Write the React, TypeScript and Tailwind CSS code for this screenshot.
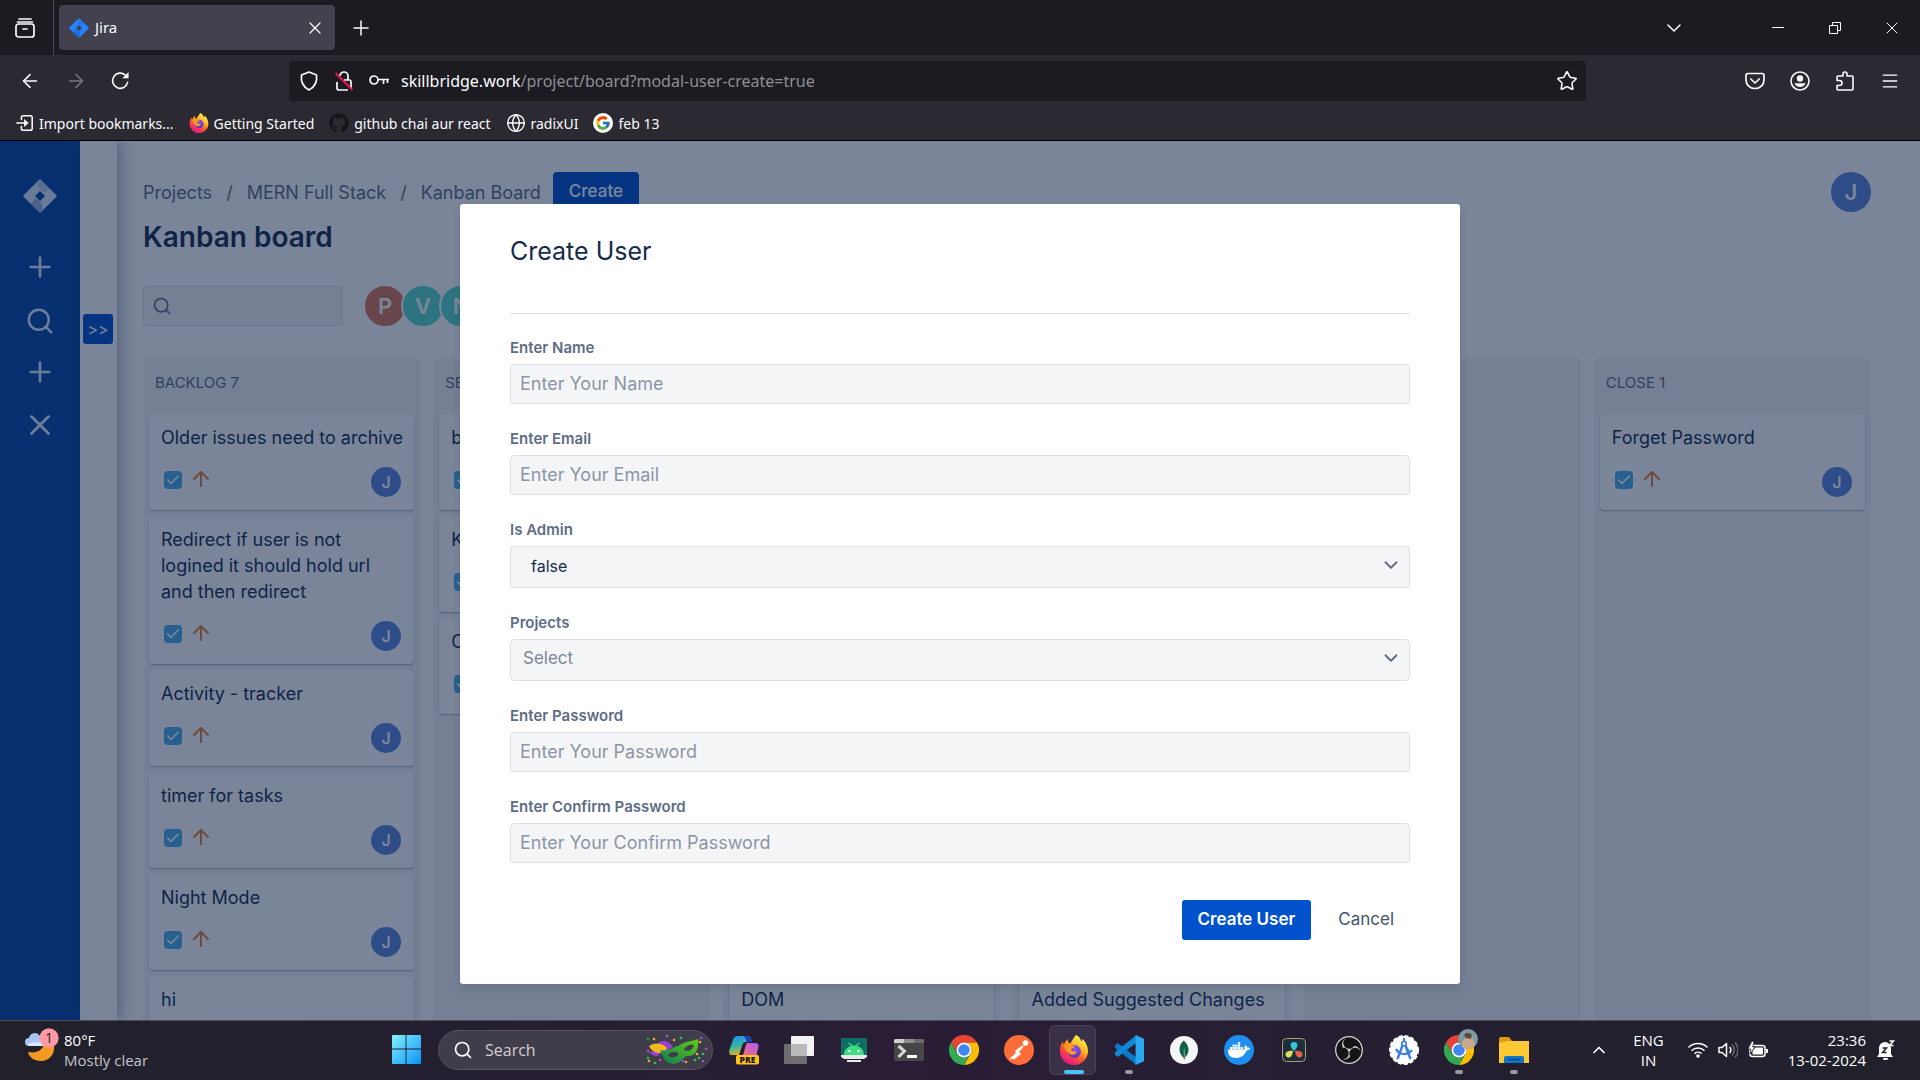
import React from 'react';
import {
  ArrowLeft,
  ArrowRight,
  ArrowUp,
  Check,
  ChevronDown,
  ChevronUp,
  Globe,
  Menu,
  Plus,
  Search,
  Star,
  X,
} from 'lucide-react';
import { FaGithub } from 'react-icons/fa';
import { FcGoogle } from 'react-icons/fc';
import { SiDocker, SiMongodb, SiObsstudio } from 'react-icons/si';

/* ---------- Icons ---------- */

interface IconProps {
  className?: string;
}

const JiraIcon: React.FC<IconProps> = ({ className }) => (
  <svg viewBox="0 0 34 34" className={className}>
    <path fillRule="evenodd" fill="currentColor" d="M17 0l16.400 16.200a1.100 1.100 0 010 1.600L17 34 .6 17.800a1.100 1.100 0 010-1.600zM17 12l-5 5 5 5 5-5z" />
    <path d="M17 0c-3 3-3 7 0 10l5 4 4-5z" fill="#0747a6" opacity="0.18" />
    <path d="M17 34c3-3 3-8 0-11l-5-4-4 6z" fill="#0747a6" opacity="0.35" />
  </svg>
);

const FirefoxIcon: React.FC<IconProps> = ({ className }) => (
  <svg viewBox="0 0 32 32" className={className}>
    <defs>
      <linearGradient id="ff-body" x1="0.8" y1="0.1" x2="0.25" y2="0.95">
        <stop offset="0" stopColor="#fff44f" />
        <stop offset="0.35" stopColor="#ffb01f" />
        <stop offset="0.6" stopColor="#ff5a2c" />
        <stop offset="1" stopColor="#e3128f" />
      </linearGradient>
      <radialGradient id="ff-core" cx="0.5" cy="0.3" r="0.7">
        <stop offset="0" stopColor="#8b55ee" />
        <stop offset="1" stopColor="#5a32c8" />
      </radialGradient>
    </defs>
    <path
      fill="url(#ff-body)"
      d="M18 0c3 1 5 4 6 7 1-1 1-2 1-3 3 3 6 8 6 13 0 8-6.500 15-15 15S1 25.500 1 17c0-4 1-7 3-10 0 2 1 3 1 3 1-2 3-4 4-6 0 3 1 4 3 5 2-3 3-5 6-9z"
    />
    <circle cx="16.500" cy="17.500" r="6.800" fill="url(#ff-core)" />
    <path fill="#ff9a20" d="M5 11c3-2 6-1 8 0l4 1c-1 2-4 2-4 4 1 2 4 1 6 2-2 4-7 4-9 1-2-1-4-4-5-8z" />
  </svg>
);

const ChromeIcon: React.FC<IconProps> = ({ className }) => (
  <svg viewBox="0 0 32 32" className={className}>
    <path fill="#ea4335" d="M2.100 8A16 16 0 0129.900 8H16a8 8 0 00-6.900 12z" />
    <path fill="#fbbc04" d="M29.900 8A16 16 0 0116 32l6.900-12A8 8 0 0016 8z" />
    <path fill="#34a853" d="M16 32A16 16 0 012.100 8l7 12a8 8 0 0013.800 0z" />
    <circle cx="16" cy="16" r="8" fill="#fff" />
    <circle cx="16" cy="16" r="6.200" fill="#4285f4" />
  </svg>
);

const LibraryIcon: React.FC<IconProps> = ({ className }) => (
  <svg viewBox="0 0 20 20" className={className} fill="none" stroke="currentColor" strokeWidth="1.700" strokeLinecap="round">
    <path d="M4 1h12M2.500 4h15" />
    <rect x="1" y="6" width="18" height="13" rx="2.500" />
    <path d="M8 11h4" />
  </svg>
);

const ReloadIcon: React.FC<IconProps> = ({ className }) => (
  <svg viewBox="0 0 20 20" className={className} fill="none" stroke="currentColor" strokeWidth="1.700" strokeLinecap="round">
    <path d="M17.500 12A8 8 0 1115 4.200l2 2" />
    <path d="M18.500 1v6.500H12z" fill="currentColor" stroke="none" />
  </svg>
);

const ShieldIcon: React.FC<IconProps> = ({ className }) => (
  <svg viewBox="0 0 20 20" className={className} fill="none" stroke="currentColor" strokeWidth="1.700" strokeLinejoin="round">
    <path d="M10 1l7.500 3c.8 6-.8 11.500-7.500 15C3.300 15.500 1.700 10 2.500 4z" />
  </svg>
);

const BrokenLockIcon: React.FC<IconProps> = ({ className }) => (
  <svg viewBox="0 0 20 20" className={className} fill="none" stroke="currentColor" strokeWidth="1.700">
    <path d="M6 5a4 4 0 018 0v4" />
    <path d="M10 9h5a2 2 0 012 2v6M14 19H5a2 2 0 01-2-2v-6" />
    <path d="M1.500 2l17 17" stroke="#f0174f" strokeWidth="2" />
  </svg>
);

const KeyIcon: React.FC<IconProps> = ({ className }) => (
  <svg viewBox="0 0 20 20" className={className} fill="none" stroke="currentColor" strokeWidth="1.700">
    <circle cx="5" cy="9" r="4" />
    <path d="M9 8.500h11M14.500 9v4M18.500 9v3" />
  </svg>
);

const ImportIcon: React.FC<IconProps> = ({ className }) => (
  <svg viewBox="0 0 20 20" className={className} fill="none" stroke="currentColor" strokeWidth="1.700" strokeLinecap="round">
    <path d="M6 6V4a2 2 0 012-2h8a2 2 0 012 2v12a2 2 0 01-2 2H8a2 2 0 01-2-2v-2M1 10h10" />
    <path d="M9 5.500l5 4.500-5 4.500z" fill="currentColor" stroke="none" />
  </svg>
);

const PocketIcon: React.FC<IconProps> = ({ className }) => (
  <svg viewBox="0 0 20 20" className={className} fill="none" stroke="currentColor" strokeWidth="1.700" strokeLinecap="round" strokeLinejoin="round">
    <path d="M3 2.500h14a2 2 0 012 2V9a9 8.500 0 01-18 0V4.500a2 2 0 012-2z" />
    <path d="M5.800 8l4.200 4 4.200-4" />
  </svg>
);

const AccountIcon: React.FC<IconProps> = ({ className }) => (
  <svg viewBox="0 0 20 20" className={className} fill="none">
    <circle cx="10" cy="10" r="9" stroke="currentColor" strokeWidth="1.600" />
    <circle cx="10" cy="7.500" r="3.200" fill="currentColor" />
    <path d="M4.500 12.300h11c-.8 2.500-3 3.700-5.500 3.700s-4.700-1.200-5.500-3.700z" fill="currentColor" />
  </svg>
);

const PuzzleIcon: React.FC<IconProps> = ({ className }) => (
  <svg viewBox="0 0 20 20" className={className} fill="none" stroke="currentColor" strokeWidth="1.600" strokeLinejoin="round">
    <path d="M2 7.500V6a1 1 0 011-1h5V3a2 2 0 014 0v2h5a1 1 0 011 1v12a1 1 0 01-1 1H3a1 1 0 01-1-1v-3.500h2.500a2.500 2.500 0 000-5H2z" />
  </svg>
);

const VsCodeIcon: React.FC<IconProps> = ({ className }) => (
  <svg viewBox="0 0 32 32" className={className}>
    <path fill="#0a7ac8" d="M1 11l3-2.500L24 24v8L1 13.500z" />
    <path fill="#1088d8" d="M1 21l3 2.500L24 8V0L1 18.500z" />
    <path fill="#2aa9f2" d="M23 0l9 4v24l-9 4z" />
  </svg>
);

const WindowsIcon: React.FC<IconProps> = ({ className }) => (
  <svg viewBox="0 0 30 30" className={className}>
    <defs>
      <linearGradient id="win" x1="0" y1="0" x2="1" y2="1">
        <stop offset="0" stopColor="#83f2ff" />
        <stop offset="1" stopColor="#0a93f5" />
      </linearGradient>
    </defs>
    <path fill="url(#win)" d="M0 1a1 1 0 011-1h13v14H0zM15 0h14a1 1 0 011 1v13H15zM0 15h14v15H1a1 1 0 01-1-1zM15 15h15v14a1 1 0 01-1 1H15z" />
  </svg>
);

const WeatherIcon: React.FC<IconProps> = ({ className }) => (
  <svg viewBox="0 0 34 34" className={className}>
    <path fill="#f59a23" d="M28 13c4 10-2 20-12 20C9 33 4 29 3 24c10 2 17-3 16-12z" />
    <path fill="#a9c4f5" d="M4 18a4 4 0 010-8 6 6 0 0111-2 5 5 0 015 10z" />
    <path fill="#dde9fd" d="M3 16c4-2 12-2 17-1v3H4z" />
    <circle cx="24" cy="10" r="9.700" fill="#ff99a4" />
    <text x="24" y="15" textAnchor="middle" fontSize="14" fontFamily="Open Sans, sans-serif" fill="#2b2030">
      1
    </text>
  </svg>
);

const confetti = [
  [2, 5, '#1f9e45'], [8, 5, '#e0b030'], [21, 2, '#a34fd8'], [28, 6, '#e0b030'], [35, 4, '#2fc44c'],
  [55, 4, '#a34fd8'], [54, 8, '#e0b030'], [60, 15, '#a34fd8'], [51, 20, '#e0b030'], [57, 20, '#2fc44c'],
  [53, 24, '#2fc44c'], [57, 27, '#a34fd8'], [2, 17, '#a34fd8'], [2, 24, '#2fc44c'], [3, 27, '#e0b030'],
  [9, 29, '#2fc44c'], [14, 26, '#a34fd8'], [37, 27, '#a34fd8'], [40, 28, '#e0b030'], [49, 26, '#2fc44c'],
] as const;

const MaskIcon: React.FC<IconProps> = ({ className }) => (
  <svg viewBox="0 0 62 32" className={className}>
    <defs>
      <linearGradient id="mask" x1="0" y1="1" x2="1" y2="0">
        <stop offset="0" stopColor="#0c7a54" />
        <stop offset="1" stopColor="#62cf15" />
      </linearGradient>
    </defs>
    {confetti.map(([x, y, fill]) => (
      <circle key={`${x}-${y}`} cx={x} cy={y} r="1.300" fill={fill} />
    ))}
    <path fill="#9a3fd4" d="M12 9c5-4 12-2 15 4l-7 4zM3 18c4 0 8-2 13-1l-4 5c-3 0-7-1-9-4z" />
    <path fill="#f5b71f" d="M3 12c6-4 14-3 18 2l-3 5C12 19 6 19 3 12z" />
    <path
      fill="url(#mask)"
      fillRule="evenodd"
      d="M14 16c6 2 11-2 18-4 6-5 12-4 20-7 1 10-2 17-10 17-5 0-6 7-14 8-7 0-11-5-14-14zm8 5c3 4 8 3 11-1-3-3-8-3-11 1zm16-5c4 2 9 0 10-5-4-1-9 1-10 5z"
    />
  </svg>
);

const CopilotIcon: React.FC<IconProps> = ({ className }) => (
  <svg viewBox="0 0 30 30" className={className}>
    <defs>
      <linearGradient id="cp-a" x1="0" y1="0" x2="0.3" y2="1">
        <stop offset="0" stopColor="#1f8ff5" />
        <stop offset="0.6" stopColor="#38b6a0" />
        <stop offset="1" stopColor="#e6b020" />
      </linearGradient>
      <linearGradient id="cp-b" x1="1" y1="0" x2="0" y2="1">
        <stop offset="0" stopColor="#b05cf5" />
        <stop offset="1" stopColor="#fb6a70" />
      </linearGradient>
    </defs>
    <path fill="url(#cp-a)" d="M9 1h9c3 0 4 2 5 6h-6c-2 0-3 1-4 4l-3 9H3c-4 0-3-4-2-7l3-8c1-3 2-4 5-4z" />
    <path fill="#1840c0" d="M15 1h3c3 0 4 2 5 6h-5z" />
    <path fill="url(#cp-b)" d="M18 8h8c4 0 4 3 3 6l-2 8H12c3-2 3-6 4-9s1-4 2-5z" />
    <rect x="7" y="20" width="23" height="9.500" rx="2" fill="#ffc31f" />
    <text x="18.500" y="28" textAnchor="middle" fontSize="8.500" fontWeight="800" fontFamily="Open Sans, sans-serif" fill="#201a10">
      PRE
    </text>
  </svg>
);

const TaskViewIcon: React.FC<IconProps> = ({ className }) => (
  <svg viewBox="0 0 30 30" className={className}>
    <rect x="0" y="9" width="23" height="20" rx="1" fill="#6e6e70" />
    <rect x="7" y="1" width="23" height="20" rx="1" fill="#f2f2f3" />
    <path d="M7 9h16v12H7z" fill="#b9b9bb" />
  </svg>
);

const AndroidIcon: React.FC<IconProps> = ({ className }) => (
  <svg viewBox="0 0 30 30" className={className}>
    <rect x="2" y="3" width="26" height="18" rx="1" fill="#0d6e63" />
    <path fill="#3ddc84" d="M5 20c0-5 3-8 7-9l-3-3 1-.6 3.500 3h3l3.500-3 1 .6-3 3c4 1 7 4 7 9z" />
    <circle cx="10.500" cy="16" r="1.200" fill="#fff" />
    <circle cx="19.500" cy="16" r="1.200" fill="#fff" />
    <path fill="#e8eaea" d="M2 20h26v2l-3 2H5l-3-2zM8 25h14v2H8z" />
  </svg>
);

const TerminalIcon: React.FC<IconProps> = ({ className }) => (
  <svg viewBox="0 0 30 30" className={className}>
    <rect x="0" y="4" width="30" height="22" rx="1.500" fill="#464646" />
    <path d="M0 5.500A1.500 1.500 0 011.500 4H10v4H0z" fill="#d0d0d0" />
    <path d="M10 4h10v4H10z" fill="#8e8e8e" />
    <path d="M20 4h8.500A1.500 1.500 0 0130 5.500V8H20z" fill="#6a6a6a" />
    <path d="M4.500 11l6 5-6 6" fill="none" stroke="#d6d6d6" strokeWidth="3" />
    <path d="M13 20h10v3H13z" fill="#fff" />
  </svg>
);

const PostmanIcon: React.FC<IconProps> = ({ className }) => (
  <svg viewBox="0 0 30 30" className={className}>
    <circle cx="15" cy="15" r="15" fill="#ff6c37" />
    <circle cx="21.500" cy="8" r="2.800" fill="#fff" />
    <path d="M19 11l-5 6 2 2-7 5 4-7-1-1z" fill="#ffd9cb" stroke="#fff" strokeWidth="1.600" />
    <path d="M6 24l6-5" stroke="#fff" strokeWidth="1.500" />
  </svg>
);

const DavinciIcon: React.FC<IconProps> = ({ className }) => (
  <svg viewBox="0 0 30 30" className={className}>
    <rect x="3.500" y="3.500" width="23" height="23" rx="4" fill="#1c2f3c" stroke="#b09a6a" />
    <path d="M15 16c-5-5-4-9 0-9s5 4 0 9z" fill="#35c5dd" />
    <path d="M14 16c-1 7-5 8-7 5s2-6 7-5z" fill="#dfe058" />
    <path d="M16 16c1 7 5 8 7 5s-2-6-7-5z" fill="#ef5b4c" />
  </svg>
);

const AndroidStudioIcon: React.FC<IconProps> = ({ className }) => (
  <svg viewBox="0 0 30 30" className={className}>
    <circle cx="15" cy="15" r="14" fill="#fff" stroke="#fff" strokeWidth="2" strokeDasharray="4 2" />
    <path d="M16 12a6 6 0 015 8l-3-1z" fill="#35b566" />
    <path d="M14 9L8.500 24M16 9l5.500 15" stroke="#3c7de8" strokeWidth="2.400" fill="none" />
    <path d="M7 14c3 6 12 7 16 1" stroke="#3c7de8" strokeWidth="2.200" fill="none" />
    <path d="M15 3v3" stroke="#3c7de8" strokeWidth="2" />
    <circle cx="15" cy="8.500" r="2.300" fill="#fff" stroke="#3c7de8" strokeWidth="1.600" />
  </svg>
);

const ExplorerIcon: React.FC<IconProps> = ({ className }) => (
  <svg viewBox="0 0 30 30" className={className}>
    <path d="M0 4a2 2 0 012-2h8l3 4h-1v6H0z" fill="#e09c10" />
    <path d="M0 8l9-2h21v22H0z" fill="#fdc935" />
    <path d="M5 28v-5a2 2 0 012-2h16a2 2 0 012 2v5z" fill="#1074c9" />
    <path d="M9 24.500h12" stroke="#07498c" strokeWidth="1.500" />
  </svg>
);

const WifiIcon: React.FC<IconProps> = ({ className }) => (
  <svg viewBox="0 0 20 16" className={className} fill="none" stroke="currentColor" strokeWidth="1.500">
    <path d="M.5 5.500a13.500 13.500 0 0119 0M3.500 8.700a9.200 9.200 0 0113 0M6.500 11.600a5 5 0 017 0" />
    <circle cx="10" cy="14" r="1.800" fill="currentColor" stroke="none" />
  </svg>
);

const VolumeIcon: React.FC<IconProps> = ({ className }) => (
  <svg viewBox="0 0 20 18" className={className} fill="none" stroke="currentColor" strokeWidth="1.500" strokeLinejoin="round">
    <path d="M1 6.500h3l4.500-4v13L4 11.500H1z" />
    <path d="M11.500 6a4 4 0 010 6" />
    <path d="M14 3.500a8 8 0 010 11M17 1.500c4 4 4 11 0 15" stroke="#66666f" />
  </svg>
);

const BatteryIcon: React.FC<IconProps> = ({ className }) => (
  <svg viewBox="0 0 20 18" className={className}>
    <rect x="2" y="4.500" width="15" height="11" rx="2.500" fill="none" stroke="currentColor" strokeWidth="1.500" />
    <path d="M4.500 13.500V10l3-3.500h7.500v7zM18 8h2v4h-2z" fill="currentColor" />
    <path d="M4 0L0 8h3l-1 5 5-7H4.500L6 1z" fill="currentColor" stroke="#22222c" strokeWidth="0.700" />
  </svg>
);

const BellIcon: React.FC<IconProps> = ({ className }) => (
  <svg viewBox="0 0 18 20" className={className}>
    <path d="M2 14V8a6 6 0 0112 0v6l2 3H0zM6 18h5a2.500 2.500 0 01-5 0z" fill="currentColor" />
    <path d="M5.500 8h4l-4 4.500h4" fill="none" stroke="#22222c" strokeWidth="1.500" />
    <path d="M12.500 1h4l-4 4.500h4" fill="none" stroke="currentColor" strokeWidth="1.500" />
  </svg>
);

/* ---------- Browser chrome ---------- */

const TabBar: React.FC = () => (
  <div className="flex h-[55px] shrink-0 items-center bg-[#1c1b22] text-[#fbfbfe]">
    <button aria-label="View" className="ml-[15px] mr-[18px] h-5 w-5">
      <LibraryIcon className="h-5 w-5" />
    </button>
    <div className="mr-[5px] h-full w-px bg-[#4a4954]" />
    <div className="flex h-[45px] w-[276px] items-center rounded bg-[#42414d] pl-2.5 pr-2.5 shadow">
      <JiraIcon className="h-5 w-5 text-[#2684ff]" />
      <span className="ml-[6px] flex-1 text-[15px]">Jira</span>
      <button aria-label="Close tab">
        <X className="h-5 w-5" strokeWidth={1.5} />
      </button>
    </div>
    <button aria-label="New tab" className="ml-[14px]">
      <Plus className="h-6 w-6" strokeWidth={1.5} />
    </button>
    <div className="ml-auto flex items-center">
      <button aria-label="List all tabs" className="mr-[63px]">
        <ChevronDown className="h-6 w-6" strokeWidth={1.5} />
      </button>
      <button aria-label="Minimise" className="flex w-[57px] justify-center">
        <span className="h-px w-3 bg-white" />
      </button>
      <button aria-label="Restore" className="flex w-[57px] justify-center">
        <svg viewBox="0 0 12 12" className="h-3 w-3" fill="none" stroke="currentColor">
          <path d="M.5 3.500h8v8h-8zM3.500 3V.5h8v8H9" />
        </svg>
      </button>
      <button aria-label="Close" className="flex w-[57px] justify-center">
        <X className="h-5 w-5" strokeWidth={1.2} />
      </button>
    </div>
  </div>
);

const NavBar: React.FC = () => (
  <div className="flex h-[51px] shrink-0 items-center bg-[#2b2a33] text-[#fbfbfe]">
    <div className="flex items-center gap-6 pl-[19px]">
      <button aria-label="Back">
        <ArrowLeft className="h-[22px] w-[22px]" strokeWidth={1.7} />
      </button>
      <button aria-label="Forward" className="text-[#77767f]">
        <ArrowRight className="h-[22px] w-[22px]" strokeWidth={1.7} />
      </button>
      <button aria-label="Reload">
        <ReloadIcon className="h-[19px] w-[19px]" />
      </button>
    </div>
    <div className="mx-[159px] flex h-10 min-w-0 flex-1 items-center rounded bg-[#1c1b22]">
      <ShieldIcon className="ml-2.5 h-5 w-5" />
      <BrokenLockIcon className="ml-[15px] h-5 w-5" />
      <KeyIcon className="ml-[15px] h-5 w-5" />
      <div className="ml-3 flex-1 truncate text-base text-[#8f8f96]">
        <span className="text-[#fbfbfe]">skillbridge.work</span>/project/board?modal-user-create=true
      </div>
      <button aria-label="Bookmark this page" className="mr-2">
        <Star className="h-[22px] w-[22px]" strokeWidth={1.7} />
      </button>
    </div>
    <div className="flex items-center gap-[25px] pr-5">
      <button aria-label="Save to Pocket">
        <PocketIcon className="h-5 w-5" />
      </button>
      <button aria-label="Account">
        <AccountIcon className="h-5 w-5" />
      </button>
      <button aria-label="Extensions">
        <PuzzleIcon className="h-5 w-5" />
      </button>
      <button aria-label="Menu">
        <Menu className="h-5 w-5" strokeWidth={1.6} />
      </button>
    </div>
  </div>
);

const bookmarks = [
  { label: 'Import bookmarks...', icon: <ImportIcon className="h-[18px] w-[18px]" /> },
  { label: 'Getting Started', icon: <FirefoxIcon className="h-5 w-5" /> },
  { label: 'github chai aur react', icon: <FaGithub className="h-5 w-5 text-[#16151a]" /> },
  { label: 'radixUI', icon: <Globe className="h-5 w-5" strokeWidth={1.7} /> },
  {
    label: 'feb 13',
    icon: (
      <span className="flex h-5 w-5 items-center justify-center rounded-full bg-white">
        <FcGoogle className="h-4 w-4" />
      </span>
    ),
  },
];

const BookmarksBar: React.FC = () => (
  <div className="flex h-[35px] shrink-0 items-center gap-[15px] border-b border-black bg-[#2b2a33] pl-4 text-[#fbfbfe]">
    {bookmarks.map(({ label, icon }) => (
      <a key={label} href="#" className="flex items-center gap-[5px] whitespace-nowrap text-[14px]">
        {icon}
        {label}
      </a>
    ))}
  </div>
);

/* ---------- Board ---------- */

interface Issue {
  title: string;
  tall?: boolean;
}

interface ColumnData {
  name: string;
  issues: Issue[];
}

const stack: Issue[] = [{ title: '' }, { title: '', tall: true }, { title: '' }, { title: '' }, { title: '' }];

const columns: ColumnData[] = [
  {
    name: 'BACKLOG 7',
    issues: [
      { title: 'Older issues need to archive' },
      { title: 'Redirect if user is not logined it should hold url and then redirect', tall: true },
      { title: 'Activity - tracker' },
      { title: 'timer for tasks' },
      { title: 'Night Mode' },
      { title: 'hi' },
    ],
  },
  { name: 'SE', issues: [{ title: 'b' }, { title: 'K' }, { title: 'C' }] },
  { name: '', issues: [...stack, { title: 'DOM' }] },
  { name: '', issues: [...stack, { title: 'Added Suggested Changes' }] },
  { name: '', issues: [] },
  { name: 'CLOSE 1', issues: [{ title: 'Forget Password' }] },
];

const IssueCard: React.FC<Issue> = ({ title, tall }) => (
  <div
    className={`flex flex-col justify-between rounded bg-white pb-[13px] pl-3 pr-2 pt-[11px] shadow-[0_1px_2px_rgba(9,30,66,0.35)] ${
      tall ? 'min-h-[148px]' : 'min-h-24'
    }`}
  >
    <p className="text-[18px] leading-[26px]">{title}</p>
    <div className="flex items-start pr-[5px]">
      <span className="ml-[3px] mt-1 flex h-[18px] w-[18px] items-center justify-center rounded-sm bg-[#4bade8]">
        <Check className="h-4 w-4 text-white" strokeWidth={2.5} />
      </span>
      <ArrowUp className="ml-[7px] h-6 w-6 text-[#e97f33]" strokeWidth={2} />
      <span className="ml-auto flex h-[30px] w-[30px] items-center justify-center rounded-full bg-[#5784da] text-base font-semibold text-white">
        J
      </span>
    </div>
  </div>
);

const Column: React.FC<ColumnData> = ({ name, issues }) => (
  <div className="min-h-[700px] rounded bg-[#f4f5f7]">
    <h2 className="h-14 pl-3 pt-[15px] text-[15px] leading-5 text-[#5e6c84]">{name}</h2>
    <div className="flex flex-col gap-1.5 px-1.5">
      {issues.map((issue, i) => (
        <IssueCard key={i} {...issue} />
      ))}
    </div>
  </div>
);

const Sidebar: React.FC = () => (
  <nav className="flex w-20 shrink-0 flex-col items-center bg-[#0747a6] pt-[38px] text-[#deebff]">
    <JiraIcon className="h-[34px] w-[34px]" />
    <button aria-label="Create issue" className="mt-[38px]">
      <Plus className="h-8 w-8" strokeWidth={2} />
    </button>
    <button aria-label="Search issues" className="mt-[23px]">
      <Search className="h-[30px] w-[30px]" strokeWidth={2} />
    </button>
    <button aria-label="Create user" className="mt-[20px]">
      <Plus className="h-8 w-8" strokeWidth={2} />
    </button>
    <button aria-label="Log out" className="mt-[20px]">
      <X className="h-[34px] w-[34px]" strokeWidth={2} />
    </button>
  </nav>
);

const Board: React.FC = () => (
  <main className="flex min-w-0 flex-1 flex-col pl-[26px] pr-[49px] pt-[31px]">
    <div className="flex h-10 shrink-0 items-center text-[18px] text-[#5e6c84]">
      <a href="#">Projects</a>
      <span className="mx-[14px]">/</span>
      <a href="#">MERN Full Stack</a>
      <span className="mx-[14px]">/</span>
      <a href="#">Kanban Board</a>
      <button className="ml-3 h-10 rounded bg-[#0052cc] px-4 text-[17px] font-medium text-white">Create</button>
      <span className="ml-auto flex h-10 w-10 items-center justify-center rounded-full bg-[#5784da] text-[22px] font-semibold text-white">
        J
      </span>
    </div>
    <h1 className="mt-2 text-[28px] font-semibold leading-[34px]">Kanban board</h1>
    <div className="mt-[30px] flex shrink-0 items-center">
      <label className="flex h-10 w-[200px] items-center rounded border border-[#dfe1e6] bg-[#f4f5f7] pl-2 text-[#5e6c84]">
        <Search className="h-5 w-5 shrink-0" strokeWidth={2} />
        <input aria-label="Search the board" className="w-full bg-transparent px-2 outline-none" />
      </label>
      <div className="ml-5 flex text-[22px] font-semibold text-white">
        <span className="flex h-11 w-11 items-center justify-center rounded-full border-2 border-white bg-[#da7657]">P</span>
        <span className="-ml-1.5 flex h-11 w-11 items-center justify-center rounded-full border-2 border-white bg-[#57dac8]">V</span>
        <span className="-ml-1.5 flex h-11 w-11 items-center justify-center rounded-full border-2 border-white bg-[#57dac8]">N</span>
      </div>
    </div>
    <div className="mt-[30px] grid grid-cols-6 gap-[13px]">
      {columns.map((column, i) => (
        <Column key={i} {...column} />
      ))}
    </div>
  </main>
);

/* ---------- Create user dialog ---------- */

const fieldClass = 'w-full rounded border border-[#dfe1e6] bg-[#f4f5f7] outline-none';

interface TextFieldProps {
  id: string;
  label: string;
  type?: string;
  placeholder: string;
}

const TextField: React.FC<TextFieldProps> = ({ id, label, type = 'text', placeholder }) => (
  <div>
    <label htmlFor={id} className="block text-[15px] font-semibold leading-[20px] text-[#5e6c84]">
      {label}
    </label>
    <input
      id={id}
      type={type}
      placeholder={placeholder}
      className={`${fieldClass} mt-1.5 block h-10 px-[9px] pb-0.5 text-[18px] placeholder:text-[#8c95a6]`}
    />
  </div>
);

interface SelectFieldProps {
  id: string;
  label: string;
  value: string;
  className: string;
}

const SelectField: React.FC<SelectFieldProps> = ({ id, label, value, className }) => (
  <div>
    <label htmlFor={id} className="block text-[15px] font-semibold leading-[20px] text-[#5e6c84]">
      {label}
    </label>
    <div className="relative mt-1.5">
      <select id={id} className={`${fieldClass} block h-[42px] appearance-none pb-0.5 ${className}`}>
        <option>{value}</option>
      </select>
      <ChevronDown className="pointer-events-none absolute right-2 top-2 h-[22px] w-[22px] text-[#5e6c84]" strokeWidth={2} />
    </div>
  </div>
);

const CreateUserDialog: React.FC = () => (
  <div className="absolute inset-0 flex items-start justify-center overflow-hidden bg-[rgba(9,30,66,0.54)] pt-[63px]">
    <form
      role="dialog"
      aria-labelledby="dialog-title"
      className="w-full max-w-[1000px] rounded-[3px] bg-white px-[50px] pb-11 pt-[31px] shadow-[0_5px_10px_rgba(0,0,0,0.1)]"
    >
      <h2 id="dialog-title" className="border-b border-[#dfe1e6] pb-[46px] text-[25px] leading-8">
        Create User
      </h2>
      <div className="mt-6 flex flex-col gap-[25px]">
        <TextField id="name" label="Enter Name" placeholder="Enter Your Name" />
        <TextField id="email" label="Enter Email" placeholder="Enter Your Email" />
        <SelectField id="admin" label="Is Admin" value="false" className="pl-5 text-base" />
        <SelectField id="projects" label="Projects" value="Select" className="pl-3 text-[17px] text-[#7a869a]" />
        <TextField id="password" type="password" label="Enter Password" placeholder="Enter Your Password" />
        <TextField id="confirm" type="password" label="Enter Confirm Password" placeholder="Enter Your Confirm Password" />
      </div>
      <div className="mt-[37px] flex justify-end gap-[11px]">
        <button type="submit" className="h-10 rounded-[3px] bg-[#0052cc] px-4 text-[17px] font-semibold text-white">
          Create User
        </button>
        <button type="button" className="h-10 px-4 text-[17px] text-[#42526e]">
          Cancel
        </button>
      </div>
    </form>
  </div>
);

/* ---------- Taskbar ---------- */

interface TaskApp {
  name: string;
  icon: React.ReactNode;
  state?: 'active' | 'running';
}

const apps: TaskApp[] = [
  { name: 'Copilot', icon: <CopilotIcon className="h-[30px] w-[30px]" /> },
  { name: 'Task view', icon: <TaskViewIcon className="h-[30px] w-[30px]" /> },
  { name: 'Android emulator', icon: <AndroidIcon className="h-[30px] w-[30px]" /> },
  { name: 'Terminal', icon: <TerminalIcon className="h-[30px] w-[30px]" /> },
  { name: 'Chrome', icon: <ChromeIcon className="h-[30px] w-[30px]" /> },
  { name: 'Postman', icon: <PostmanIcon className="h-[30px] w-[30px]" /> },
  { name: 'Firefox', icon: <FirefoxIcon className="h-[30px] w-[30px]" />, state: 'active' },
  { name: 'VS Code', icon: <VsCodeIcon className="h-[30px] w-[30px]" />, state: 'running' },
  {
    name: 'MongoDB Compass',
    icon: (
      <span className="flex h-[28px] w-[28px] items-center justify-center rounded-full bg-[#f7f7f7]">
        <SiMongodb className="h-5 w-5 text-[#116149]" />
      </span>
    ),
  },
  {
    name: 'Docker',
    icon: (
      <span className="flex h-[30px] w-[30px] items-center justify-center rounded-full bg-[#1d8fee]">
        <SiDocker className="h-[22px] w-[22px] text-white" />
      </span>
    ),
  },
  { name: 'DaVinci Resolve', icon: <DavinciIcon className="h-[30px] w-[30px]" /> },
  {
    name: 'OBS Studio',
    icon: (
      <span className="flex h-[28px] w-[28px] items-center justify-center rounded-full bg-[#151417]">
        <SiObsstudio className="h-[28px] w-[28px] text-[#d4d4d6]" />
      </span>
    ),
  },
  { name: 'Android Studio', icon: <AndroidStudioIcon className="h-[30px] w-[30px]" /> },
  {
    name: 'Chrome profile',
    state: 'running',
    icon: (
      <span className="relative">
        <ChromeIcon className="h-[30px] w-[30px]" />
        <svg viewBox="0 0 20 20" className="absolute -right-1 -top-1.5 h-5 w-5">
          <circle cx="10" cy="10" r="10" fill="#7d9aa3" />
          <path d="M4 18c0-5 1-8 4-9 2-4 7-3 7 1l2 7a10 10 0 01-13 1z" fill="#c9a98c" />
          <path d="M6 6c2-3 6-3 8 0l-1 4-5-1z" fill="#5d4a42" />
        </svg>
      </span>
    ),
  },
  { name: 'File Explorer', icon: <ExplorerIcon className="h-[30px] w-[30px]" />, state: 'running' },
];

const Taskbar: React.FC = () => (
  <footer className="flex h-[60px] shrink-0 items-center border-t border-[#4b4c57] bg-linear-to-r from-[#20212b] via-[#291d36] to-[#20212b] pb-0.5 font-['Open_Sans',sans-serif] text-white">
    <div className="flex flex-1 items-center pl-[25px]">
      <WeatherIcon className="-mt-2.5 h-[34px] w-[34px]" />
      <div className="ml-[5px] text-[15px] leading-5">
        <p>80°F</p>
        <p className="text-[#c4c4c8]">Mostly clear</p>
      </div>
    </div>
    <div className="flex items-center">
      <button aria-label="Start" className="flex w-[55px] justify-center">
        <WindowsIcon className="h-[29px] w-[29px]" />
      </button>
      <label className="ml-1 mr-[3px] flex h-10 w-[275px] items-center rounded-full border border-[#56535f] bg-[#403d4b] pl-3.5 pr-1">
        <Search className="h-5 w-5 shrink-0" strokeWidth={2} />
        <input placeholder="Search" className="ml-3 w-0 flex-1 bg-transparent text-base outline-none placeholder:text-[#d0cfd4]" />
        <MaskIcon className="h-8 w-[62px]" />
      </label>
      {apps.map(({ name, icon, state }) => (
        <button
          key={name}
          aria-label={name}
          className="relative flex h-[50px] w-[55px] items-center justify-center"
        >
          {state === 'active' && (
            <span className="absolute inset-y-0 left-[3px] right-[5px] rounded-md border border-[#4a4257] bg-[#3a3148]" />
          )}
          <span className="relative">{icon}</span>
          {state === 'active' && <span className="absolute bottom-px h-1 w-5 rounded-full bg-[#4cc2ff]" />}
          {state === 'running' && <span className="absolute bottom-px h-1 w-2 rounded-full bg-[#9a98a0]" />}
        </button>
      ))}
    </div>
    <div className="flex flex-1 items-center justify-end pr-[25px]">
      <ChevronUp className="h-5 w-5" strokeWidth={2} />
      <div className="ml-6 text-center text-[15px] leading-5">
        <p>ENG</p>
        <p>IN</p>
      </div>
      <WifiIcon className="ml-6 h-4 w-5" />
      <VolumeIcon className="ml-2.5 h-[18px] w-5" />
      <BatteryIcon className="ml-2.5 h-[18px] w-5" />
      <div className="ml-5 text-right text-[15px] leading-5">
        <p>23:36</p>
        <p>13-02-2024</p>
      </div>
      <BellIcon className="ml-[11px] h-5 w-[18px]" />
    </div>
  </footer>
);

export default function App() {
  return (
    <div className="flex h-screen flex-col overflow-hidden font-['Noto_Sans',sans-serif]">
      <TabBar />
      <NavBar />
      <BookmarksBar />
      <div className="relative flex min-h-0 flex-1 overflow-hidden bg-white font-['Inter',sans-serif] text-[#172b4d]">
        <Sidebar />
        <div className="flex w-[37px] shrink-0 flex-col items-start pl-[3px] pt-[173px] shadow-[4px_0_16px_rgba(9,30,66,0.35)]">
          <button className="h-[30px] w-[30px] rounded-[3px] bg-[#0052cc] text-base text-white">&gt;&gt;</button>
        </div>
        <Board />
        <CreateUserDialog />
      </div>
      <Taskbar />
    </div>
  );
}
